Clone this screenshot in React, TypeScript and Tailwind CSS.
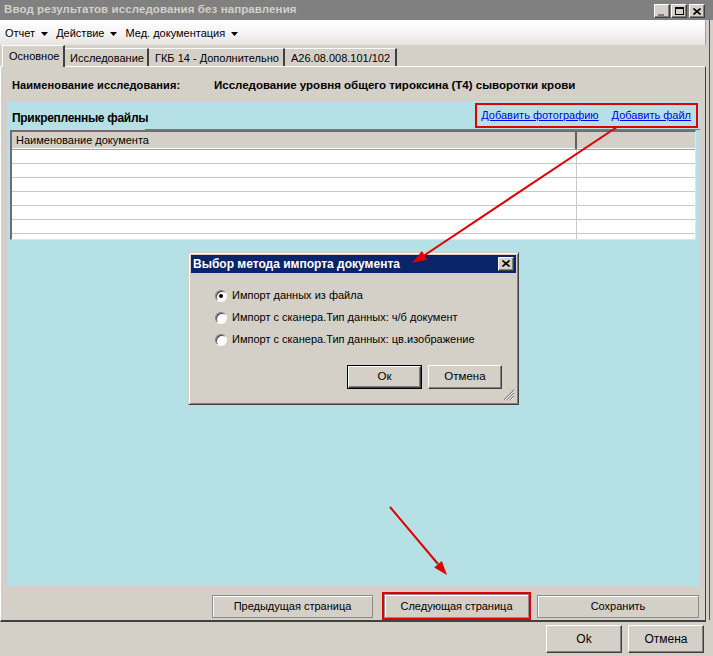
import React from "react";

const Caret = () => (
  <svg width="7" height="4" viewBox="0 0 7 4" className="ml-[6px] mr-[8px]">
    <polygon points="0,0 7,0 3.5,4" fill="#000" />
  </svg>
);

const TitleBtn = ({ children }: { children: React.ReactNode }) => (
  <div className="w-[16px] h-[14px] bg-[#d4d0c8] border-t border-l border-t-white border-l-white border-r border-b border-r-[#404040] border-b-[#404040] shadow-[inset_-1px_-1px_0_#808080] flex items-center justify-center">
    {children}
  </div>
);

const Radio = ({ checked, label }: { checked?: boolean; label: string }) => (
  <div className="h-[22px] flex items-center pl-[24px]">
    <div className="w-[12px] h-[12px] rounded-full bg-white border border-t-[#808080] border-l-[#808080] border-r-white border-b-white shadow-[inset_1px_1px_0_#404040] flex items-center justify-center">
      {checked && <div className="w-[4px] h-[4px] rounded-full bg-black" />}
    </div>
    <span className="ml-[5px] text-[11px] whitespace-nowrap">{label}</span>
  </div>
);

const FlatBtn = ({ children, w }: { children: React.ReactNode; w: string }) => (
  <div className={`${w} h-[23px] bg-[#d4d0c8] border border-[#8c8c8c] shadow-[inset_1px_1px_0_#ffffff] flex items-center justify-center text-[11px] whitespace-nowrap`}>
    {children}
  </div>
);

export default function App() {
  const rows = [0, 1, 2, 3, 4, 5];
  return (
    <div className="w-[713px] h-[656px] bg-[#d4d0c8] relative overflow-hidden font-['Liberation_Sans',Arial,sans-serif] text-[11px] text-black leading-none">
      {/* Title bar */}
      <div className="h-[20px] bg-[#808080] flex items-center pl-[4px] pr-[8px]">
        <span className="font-bold text-[11.5px] text-[#d4d0c8] tracking-[0.1px] whitespace-nowrap">Ввод результатов исследования без направления</span>
        <div className="ml-auto flex gap-[1px] mt-[2px]">
          <TitleBtn>
            <div className="w-[6px] h-[2px] bg-[#808080] mt-[7px] -ml-[2px]" />
          </TitleBtn>
          <TitleBtn>
            <div className="w-[9px] h-[8px] border border-black border-t-2" />
          </TitleBtn>
          <div className="ml-[1px]">
            <TitleBtn>
              <svg width="8" height="7" viewBox="0 0 8 7">
                <path d="M0.5 0.5 L7.5 6.5 M7.5 0.5 L0.5 6.5" stroke="#000" strokeWidth="1.6" />
              </svg>
            </TitleBtn>
          </div>
        </div>
      </div>

      <div className="flex">
        <div className="w-[706px] flex flex-col">
          {/* Menu bar */}
          <div className="h-[25px] border-t border-t-white border-r border-r-[#a0a0a0] bg-gradient-to-b from-[#ffffff] via-[#f7f4f5] to-[#e6e4e1] flex items-center pl-[5px] pt-[1px] text-[11px] whitespace-nowrap">
            <span>Отчет</span>
            <Caret />
            <span>Действие</span>
            <Caret />
            <span>Мед. документация</span>
            <Caret />
          </div>

          {/* Tabs */}
          <div className="h-[21px] flex items-end pl-[2px] relative z-10 whitespace-nowrap text-[11px]">
            <div className="w-[63px] h-[22px] -mb-[1px] bg-[#d4d0c8] border-t border-l border-t-white border-l-white border-r-2 border-r-[#404040] flex items-start pt-[5px] pl-[6px]">
              Основное
            </div>
            <div className="w-[84px] h-[18px] border-t border-t-white border-r-2 border-r-[#404040] flex items-center pl-[5px] pt-[1px]">
              Исследование
            </div>
            <div className="w-[136px] h-[18px] border-t border-t-white border-r-2 border-r-[#404040] flex items-center pl-[6px] pt-[1px]">
              ГКБ 14 - Дополнительно
            </div>
            <div className="w-[112px] h-[18px] border-t border-t-white border-r-2 border-r-[#404040] flex items-center pl-[6px] pt-[1px]">
              А26.08.008.101/102
            </div>
          </div>

          {/* Tab panel */}
          <div className="h-[556px] border-t border-t-white border-l border-l-white border-r border-r-[#404040] border-b-2 border-b-[#404040] flex flex-col relative">
            <div className="h-[34px] flex items-center pl-[11px] pt-[4px] font-bold whitespace-nowrap">
              <span className="w-[202px] text-[11px] tracking-[0.1px]">Наименование исследования:</span>
              <span className="text-[11.5px]">Исследование уровня общего тироксина (Т4) сыворотки крови</span>
            </div>

            {/* Cyan area */}
            <div className="ml-[6px] w-[693px] h-[486px] bg-[#b5e1e6] relative flex flex-col">
              <div className="h-[29px] flex items-stretch">
                <div className="w-[138px] pl-[5px] pt-[11px] font-bold text-[12px] tracking-[-0.3px] whitespace-nowrap">Прикрепленные файлы</div>
                <div className="flex-1 border-b border-b-[#7a7a7a] flex justify-end items-start pt-[2px] pr-[2px]">
                  <div className="h-[25px] border-2 border-[#e00000] flex items-center pl-[4px] pr-[5px] gap-[13px] text-[11px] text-[#0000ee] underline whitespace-nowrap">
                    <span>Добавить фотографию</span>
                    <span>Добавить файл</span>
                  </div>
                </div>
              </div>

              {/* Grid */}
              <div className="ml-[3px] w-[686px] h-[110px] bg-white border-t-2 border-l-2 border-t-[#6e6e6e] border-l-[#6e6e6e] border-r border-b border-r-[#e4e4e4] border-b-[#e4e4e4] flex flex-col overflow-hidden">
                <div className="h-[18px] bg-[#d4d0c8] flex border-b border-b-[#a0a0a0] shadow-[inset_0_-1px_0_#ffffff] shrink-0">
                  <div className="w-[565px] pl-[4px] flex items-center border-r-2 border-r-[#606060] text-[11px] whitespace-nowrap">Наименование документа</div>
                  <div className="flex-1" />
                </div>
                {rows.map((r) => (
                  <div key={r} className="h-[14px] flex border-b border-b-[#c8c8c8] shrink-0">
                    <div className="w-[565px] border-r border-r-[#c8c8c8]" />
                    <div className="flex-1" />
                  </div>
                ))}
                <div className="flex-1 flex">
                  <div className="w-[565px] border-r border-r-[#c8c8c8]" />
                </div>
              </div>

              {/* Dialog */}
              <div className="absolute left-[181px] top-[151px] w-[331px] h-[153px] bg-[#d4d0c8] border border-t-[#d4d0c8] border-l-[#d4d0c8] border-r-[#404040] border-b-[#404040] shadow-[inset_1px_1px_0_#ffffff,inset_-1px_-1px_0_#808080] p-[2px] flex flex-col">
                <div className="h-[18px] bg-[#0a246a] flex items-center pl-[2px] pr-[2px] shrink-0">
                  <span className="text-white font-bold text-[12px] whitespace-nowrap">Выбор метода импорта документа</span>
                  <div className="ml-auto">
                    <TitleBtn>
                      <svg width="8" height="7" viewBox="0 0 8 7">
                        <path d="M0.5 0.5 L7.5 6.5 M7.5 0.5 L0.5 6.5" stroke="#000" strokeWidth="1.6" />
                      </svg>
                    </TitleBtn>
                  </div>
                </div>
                <div className="pt-[12px] flex flex-col">
                  <Radio checked label="Импорт данных из файла" />
                  <Radio label="Импорт с сканера.Тип данных: ч/б документ" />
                  <Radio label="Импорт с сканера.Тип данных: цв.изображение" />
                </div>
                <div className="flex justify-end gap-[6px] pr-[14px] mt-[14px]">
                  <div className="w-[75px] h-[24px] border border-black">
                    <div className="w-full h-full bg-[#d4d0c8] border-t border-l border-t-white border-l-white border-r border-b border-r-[#404040] border-b-[#404040] shadow-[inset_-1px_-1px_0_#808080] flex items-center justify-center text-[11.5px]">
                      Ок
                    </div>
                  </div>
                  <div className="w-[74px] h-[24px] bg-[#d4d0c8] border-t border-l border-t-white border-l-white border-r border-b border-r-[#404040] border-b-[#404040] shadow-[inset_-1px_-1px_0_#808080] flex items-center justify-center text-[11.5px]">
                    Отмена
                  </div>
                </div>
                <div className="absolute right-[3px] bottom-[3px]">
                  <svg width="12" height="12" viewBox="0 0 12 12">
                    <path d="M11 1 L1 11 M11 4 L4 11 M11 7 L7 11" stroke="#808080" strokeWidth="1.2" />
                    <path d="M11 2 L2 11 M11 5 L5 11 M11 8 L8 11" stroke="#ffffff" strokeWidth="0.8" />
                  </svg>
                </div>
              </div>
            </div>

            {/* Page buttons */}
            <div className="flex items-start pl-[211px]">
              <div className="mt-[9px]">
                <FlatBtn w="w-[161px]">Предыдущая страница</FlatBtn>
              </div>
              <div className="mt-[6px] ml-[9px] border-2 border-[#e00000] w-[149px] h-[28px]">
                <div className="w-full h-full bg-[#d4d0c8] border border-[#8c8c8c] shadow-[inset_1px_1px_0_#ffffff] flex items-center justify-center text-[11px] whitespace-nowrap">
                  Следующая страница
                </div>
              </div>
              <div className="mt-[9px] ml-[6px]">
                <FlatBtn w="w-[162px]">Сохранить</FlatBtn>
              </div>
            </div>
          </div>

          {/* Bottom buttons */}
          <div className="h-[34px] flex justify-end items-start pt-[3px] gap-[6px] pr-[2px]">
            <div className="w-[76px] h-[28px] bg-[#d4d0c8] border-t border-l border-t-white border-l-white border-r border-b border-r-[#404040] border-b-[#404040] shadow-[inset_-1px_-1px_0_#808080] flex items-center justify-center text-[12px]">
              Ok
            </div>
            <div className="w-[76px] h-[28px] bg-[#d4d0c8] border-t border-l border-t-white border-l-white border-r border-b border-r-[#404040] border-b-[#404040] shadow-[inset_-1px_-1px_0_#808080] flex items-center justify-center text-[12px]">
              Отмена
            </div>
          </div>
        </div>
        <div className="w-[7px] flex">
          <div className="ml-[3px] w-[1px] h-[600px] bg-[#505050]" />
        </div>
      </div>

      {/* Annotation arrows */}
      <svg className="absolute left-0 top-0 pointer-events-none" width="713" height="656" viewBox="0 0 713 656">
        <line x1="617" y1="127" x2="424" y2="255.5" stroke="#dd0000" strokeWidth="2" />
        <polygon points="412,263 421.9,251.1 427.4,259.4" fill="#dd0000" />
        <line x1="390" y1="507" x2="438" y2="564" stroke="#dd0000" strokeWidth="2" />
        <polygon points="447,575 434.2,567.5 441.8,561.1" fill="#dd0000" />
      </svg>
    </div>
  );
}
